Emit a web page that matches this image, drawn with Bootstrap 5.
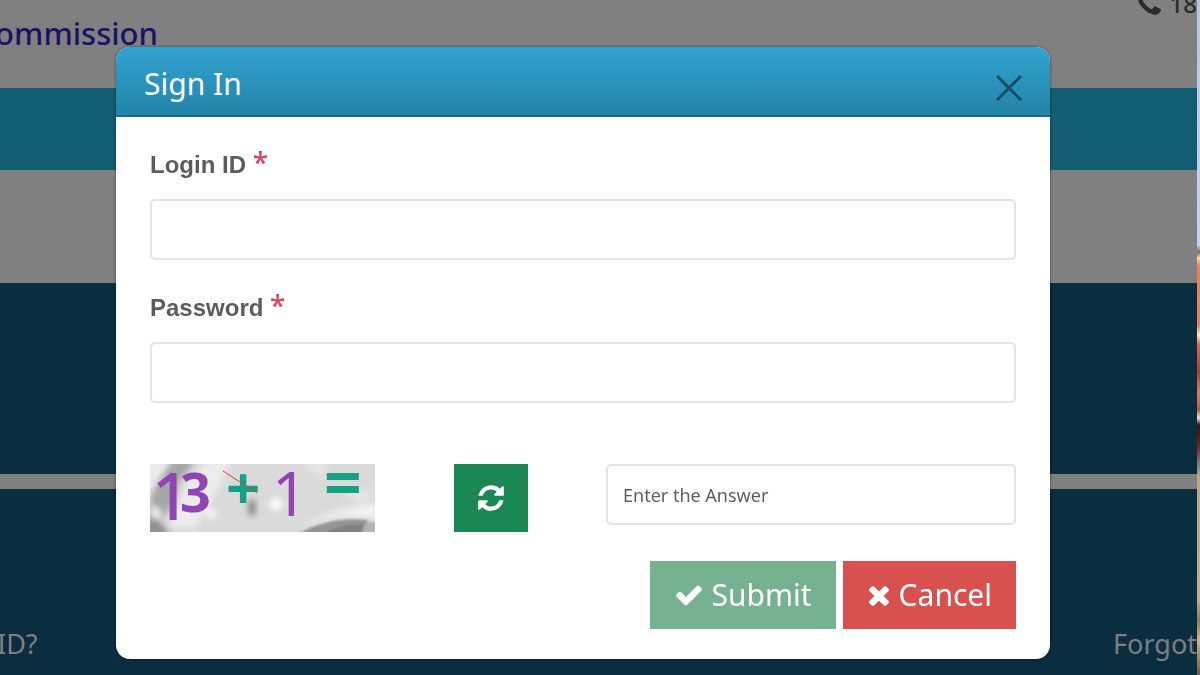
<!DOCTYPE html>
<html lang="en">
<head>
<meta charset="utf-8">
<meta name="viewport" content="width=device-width, initial-scale=1">
<title>Sign In</title>
<link href="https://cdn.jsdelivr.net/npm/bootstrap@5.3.0/dist/css/bootstrap.min.css" rel="stylesheet">
<style>
  body { font-family: "Noto Sans", "Open Sans", sans-serif; background: #808080; }
  .site { min-height: 100vh; }
  .site-main { min-width: 0; }
  .photo-edge {
    width: 3px;
    background: linear-gradient(#bcc5e0 0, #c6d0f2 245px, #7a6a66 252px, #f5d9a8 258px, #e88058 266px, #e57f5c 325px, #ffe9c0 335px, #d9634f 345px, #a8402f 372px, #dc7a66 392px, #b05a48 410px, #f3e3dc 418px, #2a1818 425px, #6a2018 445px, #8a8078 465px, #bca88c 478px, #c4aa88 600px, #8f785c 620px, #cdb594 640px, #6e5a48 675px);
  }
  .site-head { height: 88px; }
  .brand-name { width: 158px; padding-top: 14px; font: 500 31px/38px "Noto Sans", sans-serif; color: #1c1267; }
  .contact { height: 8px; gap: 6px; font-size: 24px; font-weight: 500; line-height: 8px; color: #2b2b2b; }
  .menu-band { height: 82px; background: #135d72; }
  .crumb-band { height: 113px; }
  .hero-band { height: 191px; background: #0a2d3f; }
  .link-band { margin: 15px 0 0 -3px; padding-top: 135px; background: #0a2d3f; font-size: 27px; line-height: 40px; }
  .link-band a { color: #7d8083; }

  .signin { padding: 47px 150px 16px 116px; }
  .signin .modal-dialog { max-width: none; margin: 0; }
  .signin .modal-content { border: 0; border-radius: 14px; overflow: hidden; box-shadow: 0 0 3px rgba(0, 0, 0, .5); }
  .signin .modal-header {
    height: 70px; padding: 5px 28px 0; border-bottom: 2px solid #1a6a86; border-radius: 0;
    background: linear-gradient(#31a3d1, #2484a8);
  }
  .signin .modal-title { font-size: 30px; line-height: 40px; }
  .close-x { line-height: 0; color: #134f62; }
  .signin .modal-body { padding: 30px 34px; }
  .field { margin-bottom: 30px; }
  .field label { height: 36px; margin-bottom: 16px; font: bold 24px/36px "Liberation Sans", Arial, sans-serif; color: #5c5c5c; }
  .required { font: 500 28px/30px "Noto Sans", sans-serif; color: #e2405a; }
  .box { height: 61px; border: 2px solid #e4e4e4; border-radius: 5px; padding: 0 15px; font-size: 18px; }
  .box::placeholder { color: #5e5e5e; opacity: 1; }
  .check-row { margin-top: 61px; margin-bottom: 29px; }
  .answer { width: 410px; }
  .btn-flat { height: 68px; border: 0; border-radius: 0; padding: 0 24px; font-size: 30px; line-height: 40px; color: #fff; }
  .btn-refresh { width: 74px; padding: 0; background: #1a8754; }
  .btn-submit { background: #76b291; }
  .btn-cancel { background: #d9514e; }
  .actions { gap: 7px; }
</style>
</head>
<body>
<div class="site d-flex overflow-hidden">
  <div class="site-main flex-grow-1 d-flex flex-column overflow-hidden">
    <header class="site-head d-flex justify-content-between align-items-start">
      <div class="brand-name d-flex justify-content-end text-nowrap">ommission</div>
      <div class="contact d-flex align-items-center">
        <svg width="30" height="30" viewBox="0 0 1792 1792" fill="currentColor" aria-hidden="true"><path d="M1600 1240q0 27-10 70.5t-21 68.5q-21 50-122 106-94 51-186 51-27 0-53-3.5t-57.5-12.5-47-14.5-55.5-20.5-49-18q-98-35-175-83-127-79-264-216t-216-264q-48-77-83-175-3-9-18-49t-20.5-55.5-14.5-47-12.5-57.5-3.5-53q0-92 51-186 56-101 106-122 25-11 68.5-21t70.5-10q14 0 21 3 18 6 53 76 11 19 30 54t35 63.5 31 53.5q3 4 17.5 25t21.5 35.5 7 28.5q0 20-28.5 50t-62 55-62 53-28.5 46q0 9 5 22.5t8.5 20.5 14 24 11.5 19q76 137 174 235t235 174q2 1 19 11.5t24 14 20.5 8.5 22.5 5q18 0 46-28.5t53-62 55-62 50-28.5q14 0 28.5 7t35.5 21.5 25 17.5q25 15 53.5 31t63.5 35 54 30q70 35 76 53 3 7 3 21z"/></svg>
        <span>18</span>
      </div>
    </header>
    <div class="menu-band"></div>
    <div class="crumb-band"></div>
    <div class="hero-band"></div>
    <div class="link-band flex-grow-1 d-flex justify-content-between">
      <a href="#" class="text-decoration-none">ID?</a>
      <a href="#" class="text-decoration-none">Forgot</a>
    </div>
  </div>
  <div class="photo-edge flex-shrink-0"></div>
</div>

<div class="modal signin d-block" role="dialog" aria-labelledby="signin-title">
  <div class="modal-dialog">
    <form class="modal-content">
      <div class="modal-header">
        <h1 class="modal-title fw-normal text-white" id="signin-title">Sign In</h1>
        <button type="button" class="close-x btn p-0 pt-2 border-0" aria-label="Close">
          <svg width="26" height="26" viewBox="0 0 26 26" fill="none" stroke="currentColor" stroke-width="3" aria-hidden="true"><path d="M1 1 25 25M25 1 1 25"/></svg>
        </button>
      </div>
      <div class="modal-body">
        <div class="field">
          <label for="login" class="d-block">Login ID <span class="required">*</span></label>
          <input id="login" type="text" class="form-control box">
        </div>
        <div class="field">
          <label for="password" class="d-block">Password <span class="required">*</span></label>
          <input id="password" type="password" class="form-control box">
        </div>
        <div class="check-row d-flex justify-content-between align-items-start">
          <svg width="225" height="68" viewBox="0 0 225 68" role="img" aria-label="13 + 1 =" font-family="Noto Sans, sans-serif">
            <defs>
              <filter id="soft" x="-30%" y="-30%" width="160%" height="160%"><feGaussianBlur stdDeviation="3"/></filter>
              <filter id="edge" x="-10%" y="-20%" width="120%" height="140%"><feGaussianBlur stdDeviation="1"/></filter>
              <clipPath id="frame"><path d="M0 0h225v68H0z"/></clipPath>
            </defs>
            <g clip-path="url(#frame)">
              <path fill="#dadada" d="M0 0h225v68H0z"/>
              <g filter="url(#soft)">
                <path fill="#ececec" d="M-4-4H20L4 24-4 40zM58-4H82L68 26 46 64H20L36 20z"/>
                <path fill="#a6a6a6" d="M22-4H46L30 16 22 42 12 54-4 50 2 28z"/>
                <path fill="#8e8e8e" d="M-4 52 8 56 22 72H-4z"/>
                <path fill="#fafafa" d="M0 40l12 8-8 8zM54 44l14 4-6 10z"/>
                <path fill="#e6e6e6" d="M150-4h30l-8 20zM190 26h34l-10 16z"/>
                <circle cx="126" cy="40" r="6" fill="#fff"/>
                <path fill="#f4f4f4" d="M150 60 190 46 228 40V54L190 52z"/>
                <path fill="#777" d="M99 36h6v15h-6z"/>
              </g>
              <g filter="url(#edge)">
                <path fill="#949494" d="M148 70Q180 52 218 56L212 70z"/>
                <path fill="#808080" d="M174 70Q194 58 214 61L210 70z"/>
                <path fill="#b4b4b4" d="M216 58h10v12h-14z"/>
              </g>
              <text x="2" y="56" font-size="66" font-weight="500" fill="#9145b5">1</text>
              <text x="30" y="48" font-size="54" font-weight="700" fill="#9145b5">3</text>
              <text x="76" y="46" font-size="60" font-weight="700" fill="#16a085">+</text>
              <text x="122" y="52" font-size="62" font-weight="400" fill="#9145b5">1</text>
              <text x="174" y="43" font-size="66" font-weight="700" fill="#16a085">=</text>
              <path d="M73 7 107 29" stroke="#d8473a" stroke-width="1"/>
            </g>
          </svg>
          <button type="button" class="btn btn-flat btn-refresh" aria-label="Refresh">
            <svg class="d-block m-auto" width="30" height="30" viewBox="0 0 1792 1792" fill="currentColor" aria-hidden="true"><path d="M1639 1056q0 5-1 7-64 268-268 434.5t-478 166.5q-146 0-282.5-55t-243.5-157l-129 129q-19 19-45 19t-45-19-19-45v-448q0-26 19-45t45-19h448q26 0 45 19t19 45-19 45l-137 137q71 66 161 102t187 36q134 0 250-65t186-179q11-17 53-117 8-23 30-23h192q13 0 22.5 9.5t9.5 22.5zm25-800v448q0 26-19 45t-45 19h-448q-26 0-45-19t-19-45 19-45l138-138q-148-137-349-137-134 0-250 65t-186 179q-11 17-53 117-8 23-30 23h-199q-13 0-22.5-9.5t-9.5-22.5v-7q65-268 270-434.5t480-166.5q146 0 284 55.5t245 156.5l130-129q19-19 45-19t45 19 19 45z"/></svg>
          </button>
          <input type="text" class="form-control box answer" placeholder="Enter the Answer" aria-label="Enter the Answer">
        </div>
        <div class="actions d-flex justify-content-end">
          <button type="submit" class="btn btn-flat btn-submit d-flex align-items-center gap-2">
            <svg width="30" height="30" viewBox="0 0 1792 1792" fill="currentColor" aria-hidden="true"><path d="M1671 566q0 40-28 68l-724 724-136 136q-28 28-68 28t-68-28l-136-136-362-362q-28-28-28-68t28-68l136-136q28-28 68-28t68 28l294 295 656-657q28-28 68-28t68 28l136 136q28 28 28 68z"/></svg>
            <span>Submit</span>
          </button>
          <button type="button" class="btn btn-flat btn-cancel d-flex align-items-center gap-2">
            <svg width="24" height="30" viewBox="192 0 1408 1792" fill="currentColor" aria-hidden="true"><path d="M1490 1322q0 40-28 68l-136 136q-28 28-68 28t-68-28l-294-294-294 294q-28 28-68 28t-68-28l-136-136q-28-28-28-68t28-68l294-294-294-294q-28-28-28-68t28-68l136-136q28-28 68-28t68 28l294 294 294-294q28-28 68-28t68 28l136 136q28 28 28 68t-28 68l-294 294 294 294q28 28 28 68z"/></svg>
            <span>Cancel</span>
          </button>
        </div>
      </div>
    </form>
  </div>
</div>
<script src="https://cdn.jsdelivr.net/npm/bootstrap@5.3.0/dist/js/bootstrap.bundle.min.js"></script>
</body>
</html>
